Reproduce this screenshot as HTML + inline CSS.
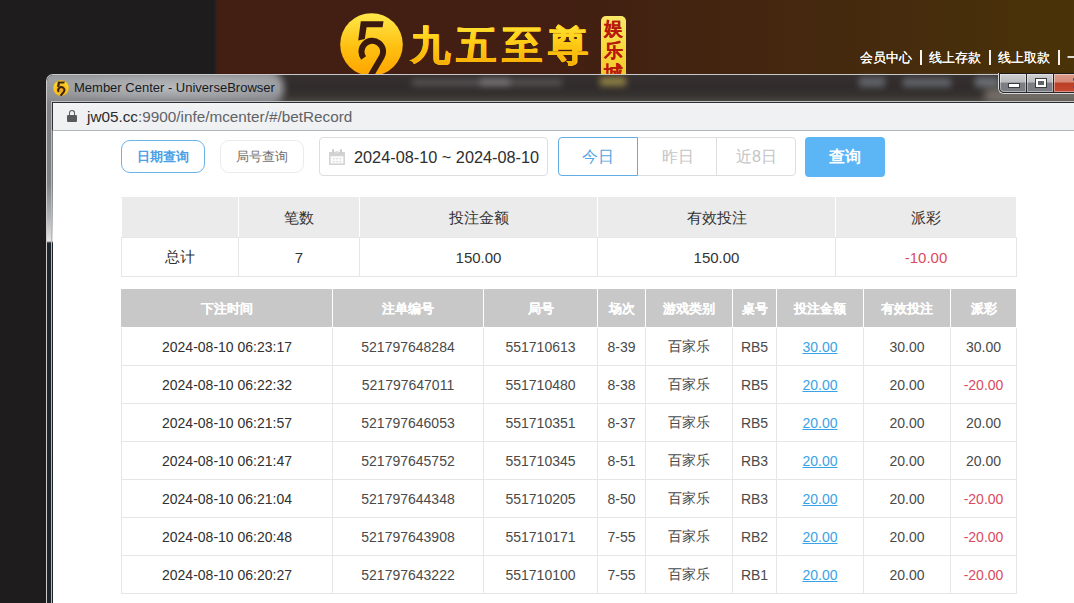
<!DOCTYPE html>
<html><head><meta charset="utf-8">
<style>
*{margin:0;padding:0;box-sizing:border-box}
html,body{width:1074px;height:603px;overflow:hidden;background:#1e1c1d;font-family:"Liberation Sans",sans-serif;position:relative}
.abs{position:absolute}
#hdr{left:218px;top:0;width:860px;height:80px;background:linear-gradient(90deg,#431f13 0%,#421f12 40%,#452a0e 75%,#4a3308 100%)}
#hdrl{left:209px;top:0;width:12px;height:80px;background:linear-gradient(90deg,#1e1c1d 0%,#1c1b1f 40%,#3a2118 66%,#4a1f0c 85%,#431f13 100%)}
#logo{left:340px;top:13px;width:63px;height:63px}
#brand{left:410px;top:13px;padding-top:8px;font-size:40px;font-weight:bold;letter-spacing:6px;white-space:nowrap;line-height:48px;padding-right:20px;
 background:linear-gradient(180deg,#fff04a 0%,#ffd21a 45%,#f7a800 100%);-webkit-background-clip:text;background-clip:text;color:transparent}
#brand0{left:410px;top:13px;padding-top:8px;font-size:40px;font-weight:bold;letter-spacing:6px;white-space:nowrap;line-height:48px;color:#fcc418;text-shadow:.5px 0 0 #fcc418,-.5px 0 0 #fcc418,0 .4px 0 #fcc418}
#badge{left:600.5px;top:15.5px;width:25px;height:65px;border-radius:5px;background:linear-gradient(#fbe76a,#f8d83a 50%,#f2c428);color:#b8190c;font-size:19px;font-weight:bold;line-height:22px;text-align:center;padding-top:2px;text-shadow:.4px 0 0 #b8190c;font-family:"Liberation Serif",serif}
#nav{left:860px;top:48.5px;color:#fff;font-size:13px;white-space:nowrap;line-height:18px;text-shadow:.35px 0 0 #fff}
#nav i{display:inline-block;width:17px;height:16px;vertical-align:top;position:relative}
#nav i:after{content:"";position:absolute;left:8px;top:1px;width:1.7px;height:15px;background:#f4f2ec}
#win{left:46px;top:74px;width:1100px;height:600px;border-radius:7px 0 0 0;border:1px solid #c9cacc;border-right:none;border-bottom:none;
 background:linear-gradient(180deg,#8e9094 0px,#808286 30px,#7c7e82 60px,#7f8184 109px,#b3b4b6 143px,#dcdcdc 162px,#e6e6e6 166px,#1e252b 168px,#1e242a 100%)}
#winin{left:51px;top:101px;width:1100px;height:600px;border-left:1px solid #b9babc;border-top:1px solid #c0c1c3}
#tbar{left:47px;top:75px;width:1100px;height:27px;border-radius:6px 0 0 0;overflow:hidden;background:linear-gradient(180deg,#36302f 0,#312c2c 45%,#36322f 75%,#4a4642 100%)}
#tglow{position:absolute;left:-20px;top:-4px;width:257px;height:35px;border-radius:0 16px 16px 0;background:linear-gradient(180deg,#a3a5a9,#95979b 50%,#85878b);filter:blur(3.5px)}
#glow{left:60px;top:74px;width:220px;height:28px;background:radial-gradient(ellipse 60% 50% at 50% 50%,rgba(210,212,215,.55),rgba(210,212,215,0) 100%)}
#title{left:74px;top:80px;font-size:13px;color:#161a22;white-space:nowrap;line-height:15px}
#ico{left:53px;top:80px;width:16px;height:16px}
.blur{position:absolute;filter:blur(3px)}
#addr{left:52px;top:102px;width:1100px;height:29px;background:linear-gradient(#f6f5f5,#eff1f2 4px,#f0f1f3);border-top:1px solid #2a2d31;border-left:1px solid #2a2d31;border-bottom:1px solid #b4b5b7}
#url{left:87px;top:108px;font-size:15.3px;color:#2b2b2b;white-space:nowrap;line-height:17px}
#url span{color:#5f6368}
#lock{left:67px;top:115px;width:10px;height:7px;background:#5a5a5a;border-radius:1px}
#lockt{left:69px;top:110px;width:6px;height:7px;border:1.7px solid #5a5a5a;border-bottom:none;border-radius:3px 3px 0 0}
#content{left:53px;top:131px;width:1100px;height:480px;background:#fff}
#btns{left:998px;top:73px;width:90px;height:21px}
.btn{position:absolute;top:0;height:20px;border:1px solid #26282c;border-top-color:#1c1c1c;background:linear-gradient(#cfd0d2 0%,#b9bbbe 45%,#7c7e83 50%,#7b7d82 100%);box-shadow:inset 0 0 0 1px rgba(255,255,255,.4)}
#b1,#b2{top:140px;width:84px;height:33px;border-radius:9px;font-size:13px;line-height:32px;text-align:center}
#b1{left:121px;border:1px solid #6db3e8;color:#4ba0e6;font-weight:bold}
#b2{left:220px;border:1px solid #ebebeb;color:#707070}
#date{left:319px;top:137px;width:229px;height:39px;border:1px solid #dedede;border-radius:4px;font-size:16.3px;color:#333;line-height:38px}
#date span{position:absolute;left:34px;top:0;white-space:nowrap;color:#2e2e2e}
#cal{position:absolute;left:8.5px;top:11px;width:16px;height:16px}
#seg{left:558px;top:137px;width:238px;height:39px;border:1px solid #dedede;border-radius:4px}
#seg .s{position:absolute;top:0;height:37px;line-height:38px;text-align:center;font-size:16px;color:#c4c4c4;border-left:1px solid #dedede}
#seg .s.on{color:#55a6e0;border:1px solid #62ade6;border-radius:4px 0 0 4px;top:-1px;height:39px;left:-1px;width:80px;line-height:38px;background:#fff}
#q{left:805px;top:137px;width:80px;height:40px;border-radius:4px;background:#5cb6f6;color:#fff;font-size:16px;font-weight:bold;line-height:40px;text-align:center}
table{border-collapse:collapse;table-layout:fixed}
td{border:1px solid #e6e6e6;text-align:center;font-size:14px;color:#333;white-space:nowrap;overflow:hidden;padding:0}
#sum{left:121px;top:197px;width:895px}
#sum td{font-size:15px}
#sum tr.h td{background:#ebebeb;height:40px;padding-top:2px;border-color:#e6e6e6 #fff;border-top-color:#ebebeb}
#sum tr td{height:39px;padding-top:1px}
#det{left:121px;top:289px;width:895px}
#det tr.h td{background:#c8c8c8;color:#fff;font-weight:bold;font-size:13px;text-shadow:.4px 0 0 #fff;height:38px;padding-top:1px;border-color:#fff;border-top-color:#c8c8c8}
#det tr.h td:first-child{border-left-color:#c8c8c8}
#det tr:not(.h) td{height:38px;color:#4a4a4a}
#det tr:not(.h) td:first-child{color:#303030}
.neg{color:#dc4a5e !important}
#det a{color:#3aa3e6;text-decoration:underline}
</style></head><body>
<div id="hdrl" class="abs"></div>
<div id="hdr" class="abs"></div>
<svg id="logo" class="abs" viewBox="0 0 63 63" width="63" height="63">
 <defs><linearGradient id="lg" x1="0" y1="0" x2="0" y2="1"><stop offset="0" stop-color="#ffe84a"/><stop offset=".55" stop-color="#ffbf10"/><stop offset="1" stop-color="#ffa500"/></linearGradient></defs>
 <circle cx="31.5" cy="31.5" r="31.3" fill="url(#lg)"/>
 <path d="M20.8 8.3 L43.5 8.3 L42.6 14.2 L26.6 14.2 L24.8 26 L18.2 27.5 Z" fill="#3a1a0e"/>
 <path d="M23.6 45 A 10.8 10.8 0 1 1 41.6 44 L 30.5 63" fill="none" stroke="#3a1a0e" stroke-width="6"/>
</svg>
<div id="brand0" class="abs">九五至尊</div><div id="brand" class="abs">九五至尊</div>
<div id="badge" class="abs">娱<br>乐<br>城</div>
<div id="nav" class="abs">会员中心<i></i>线上存款<i></i>线上取款<i></i>一</div>

<div id="win" class="abs"></div>
<div id="tbar" class="abs"><div id="tglow"></div></div>
<div class="blur" style="left:412px;top:79px;width:150px;height:7px;background:rgba(175,175,180,.28)"></div>
<div class="blur" style="left:480px;top:78px;width:30px;height:8px;background:rgba(190,195,200,.3)"></div>
<div class="blur" style="left:600px;top:77px;width:26px;height:9px;background:rgba(215,195,90,.55)"></div>
<div class="blur" style="left:859px;top:77px;width:26px;height:10px;background:rgba(150,165,180,.45)"></div>
<div class="blur" style="left:903px;top:78px;width:48px;height:9px;background:rgba(150,165,180,.45)"></div>
<div class="blur" style="left:975px;top:77px;width:24px;height:10px;background:rgba(160,175,190,.5)"></div>
<div id="glow" class="abs"></div>
<svg id="ico" class="abs" viewBox="0 0 63 63" width="16" height="16">
 <defs><radialGradient id="ig" cx=".5" cy=".6" r=".55"><stop offset="0" stop-color="#f7a020"/><stop offset=".6" stop-color="#f8c020"/><stop offset="1" stop-color="#ffe040"/></radialGradient></defs>
 <circle cx="31.5" cy="31.5" r="30.5" fill="url(#ig)" stroke="#e0a000" stroke-width="2"/>
 <path d="M19 6 L46 6 L45 14 L27 14 L25 27 L16 28 Z" fill="#3a2410"/>
 <path d="M23 47 A 12 12 0 1 1 43 46 L 30 62" fill="none" stroke="#3a2410" stroke-width="8"/>
</svg>
<div id="title" class="abs">Member Center - UniverseBrowser</div>
<div class="blur" style="left:985px;top:88px;width:100px;height:14px;background:rgba(140,134,125,.75);filter:blur(4px)"></div>
<div id="btns" class="abs">
 <div style="position:absolute;left:0;top:0;width:90px;height:21px;border:1px solid #d8d8d8;border-top:none;border-right:none;border-radius:0 0 0 6px"></div>
 <div class="btn" style="left:1px;width:28px;border-radius:0 0 0 5px"></div>
 <div class="btn" style="left:28px;width:28px"></div>
 <div class="btn" style="left:55px;width:40px;background:linear-gradient(#dc9c8c 0%,#d48a76 45%,#bb3e26 50%,#c64a30 100%)"></div>
 <div style="position:absolute;left:11px;top:11px;width:10px;height:3px;background:#fff;box-shadow:0 0 0 1px #3a3c40"></div>
 <div style="position:absolute;left:38px;top:6px;width:10px;height:8px;border:2px solid #fff;box-shadow:0 0 0 1px #3a3c40;background:#606268"></div>
 <div style="position:absolute;left:74.5px;top:5px;width:3px;height:3px;background:#4a5270;border-radius:1px"></div><div style="position:absolute;left:74.5px;top:12.5px;width:3px;height:2.5px;background:#4a5270;border-radius:1px"></div>
</div>
<div id="winin" class="abs"></div>
<div id="addr" class="abs"></div>
<div id="lockt" class="abs"></div>
<div id="lock" class="abs"></div>
<div id="url" class="abs">jw05.cc<span>:9900/infe/mcenter/#/betRecord</span></div>
<div id="content" class="abs"></div>

<div id="b1" class="abs">日期查询</div>
<div id="b2" class="abs">局号查询</div>
<div id="date" class="abs"><svg id="cal" viewBox="0 0 16 16" width="16" height="16">
 <rect x="0.8" y="3.8" width="14.4" height="11.4" fill="#fafafa" stroke="#d2d2d2" stroke-width="1.5"/>
 <rect x="0" y="3" width="16" height="4.2" fill="#d2d2d2"/>
 <rect x="3" y="0.3" width="2.2" height="4" fill="#cdcdcd"/><rect x="10.8" y="0.3" width="2.2" height="4" fill="#cdcdcd"/>
 <rect x="6.5" y="2" width="3" height="2" fill="#dedede"/>
 <g fill="#dadada"><rect x="4" y="9" width="1.5" height="1.3"/><rect x="7.2" y="9" width="1.5" height="1.3"/><rect x="10.4" y="9" width="1.5" height="1.3"/><rect x="4" y="12" width="1.5" height="1.3"/><rect x="7.2" y="12" width="1.5" height="1.3"/><rect x="10.4" y="12" width="1.5" height="1.3"/></g>
</svg><span>2024-08-10 ~ 2024-08-10</span></div>
<div id="seg" class="abs"><div class="s" style="left:78px;width:80px">昨日</div><div class="s" style="left:157px;width:80px">近8日</div><div class="s on">今日</div></div>
<div id="q" class="abs">查询</div>
<table id="sum" class="abs">
<colgroup><col style="width:117px"><col style="width:121px"><col style="width:238px"><col style="width:238px"><col style="width:181px"></colgroup>
<tr class="h"><td></td><td>笔数</td><td>投注金额</td><td>有效投注</td><td>派彩</td></tr>
<tr><td>总计</td><td>7</td><td>150.00</td><td>150.00</td><td class="neg">-10.00</td></tr>
</table>
<table id="det" class="abs">
<colgroup><col style="width:211px"><col style="width:151px"><col style="width:114px"><col style="width:48px"><col style="width:87px"><col style="width:44px"><col style="width:87px"><col style="width:87px"><col style="width:66px"></colgroup>
<tr class="h"><td>下注时间</td><td>注单编号</td><td>局号</td><td>场次</td><td>游戏类别</td><td>桌号</td><td>投注金额</td><td>有效投注</td><td>派彩</td></tr>
<tr><td>2024-08-10 06:23:17</td><td>521797648284</td><td>551710613</td><td>8-39</td><td>百家乐</td><td>RB5</td><td><a>30.00</a></td><td>30.00</td><td>30.00</td></tr>
<tr><td>2024-08-10 06:22:32</td><td>521797647011</td><td>551710480</td><td>8-38</td><td>百家乐</td><td>RB5</td><td><a>20.00</a></td><td>20.00</td><td class="neg">-20.00</td></tr>
<tr><td>2024-08-10 06:21:57</td><td>521797646053</td><td>551710351</td><td>8-37</td><td>百家乐</td><td>RB5</td><td><a>20.00</a></td><td>20.00</td><td>20.00</td></tr>
<tr><td>2024-08-10 06:21:47</td><td>521797645752</td><td>551710345</td><td>8-51</td><td>百家乐</td><td>RB3</td><td><a>20.00</a></td><td>20.00</td><td>20.00</td></tr>
<tr><td>2024-08-10 06:21:04</td><td>521797644348</td><td>551710205</td><td>8-50</td><td>百家乐</td><td>RB3</td><td><a>20.00</a></td><td>20.00</td><td class="neg">-20.00</td></tr>
<tr><td>2024-08-10 06:20:48</td><td>521797643908</td><td>551710171</td><td>7-55</td><td>百家乐</td><td>RB2</td><td><a>20.00</a></td><td>20.00</td><td class="neg">-20.00</td></tr>
<tr><td>2024-08-10 06:20:27</td><td>521797643222</td><td>551710100</td><td>7-55</td><td>百家乐</td><td>RB1</td><td><a>20.00</a></td><td>20.00</td><td class="neg">-20.00</td></tr>
</table>
</body></html>
